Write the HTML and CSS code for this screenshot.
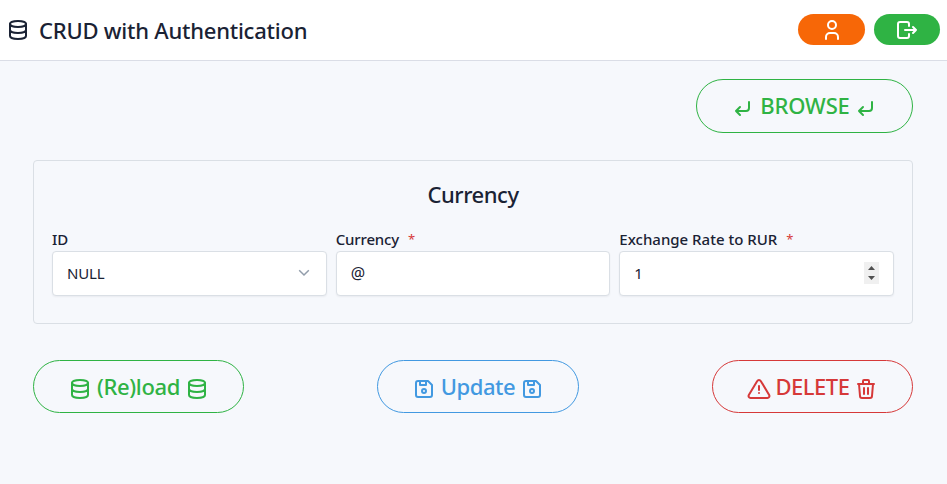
FILE: index.html
```html
<!DOCTYPE html>
<html lang="en">
<head>
<meta charset="utf-8">
<title>CRUD with Authentication</title>
<link rel="stylesheet" href="styles.css">
</head>
<body>
<svg class="sprite" aria-hidden="true">
  <symbol id="database" viewBox="0 0 24 24"><ellipse cx="12" cy="6" rx="8" ry="3"/><path d="M4 6v6a8 3 0 0 0 16 0V6M4 12v6a8 3 0 0 0 16 0v-6"/></symbol>
  <symbol id="user" viewBox="0 0 24 24"><circle cx="12" cy="7" r="4"/><path d="M6 21v-2a4 4 0 0 1 4-4h4a4 4 0 0 1 4 4v2"/></symbol>
  <symbol id="logout" viewBox="0 0 24 24"><path d="M14 8V6a2 2 0 0 0-2-2H5a2 2 0 0 0-2 2v12a2 2 0 0 0 2 2h7a2 2 0 0 0 2-2v-2M10 12h11l-3-3m0 6l3-3"/></symbol>
  <symbol id="enter" viewBox="0 0 24 24"><path d="M18 6v6a3 3 0 0 1-3 3H5l4-4m0 8l-4-4"/></symbol>
  <symbol id="floppy" viewBox="0 0 24 24"><path d="M6 4h10l4 4v10a2 2 0 0 1-2 2H6a2 2 0 0 1-2-2V6a2 2 0 0 1 2-2M14 4v4H8V4"/><circle cx="12" cy="14" r="2"/></symbol>
  <symbol id="alert" viewBox="0 0 24 24"><path d="M12 9v4M12 16v.01M10.24 3.96l-8.42 14.06A1.99 1.99 0 0 0 3.53 21h16.94a1.99 1.99 0 0 0 1.7-2.98L13.74 3.96a2 2 0 0 0-3.5 0z"/></symbol>
  <symbol id="trash" viewBox="0 0 24 24"><path d="M4 7h16M10 11v6M14 11v6M5 7l1 12a2 2 0 0 0 2 2h8a2 2 0 0 0 2-2l1-12M9 7V4a1 1 0 0 1 1-1h4a1 1 0 0 1 1 1v3"/></symbol>
</svg>

<header class="topbar">
  <svg class="icon"><use href="#database"/></svg>
  <h1 class="title">CRUD with Authentication</h1>
  <button class="pill pill-user" aria-label="User"><svg class="icon"><use href="#user"/></svg></button>
  <button class="pill pill-logout" aria-label="Log out"><svg class="icon"><use href="#logout"/></svg></button>
</header>

<main class="page">
  <div class="browse-row">
    <button class="btn btn-browse"><svg class="icon"><use href="#enter"/></svg><span class="label">BROWSE</span><svg class="icon"><use href="#enter"/></svg></button>
  </div>

  <section class="card">
    <h2 class="card-title">Currency</h2>
    <div class="fields">
      <div class="field">
        <div class="caption"><span>ID</span></div>
        <div class="control"><span class="value">NULL</span>
          <svg class="chevron" viewBox="0 0 12 8"><path d="M1.2 1.2L6 6l4.8-4.8"/></svg></div>
      </div>
      <div class="field">
        <div class="caption"><span class="tight">Currency</span><span class="star">*</span></div>
        <div class="control"><span class="value value-at">@</span></div>
      </div>
      <div class="field">
        <div class="caption"><span>Exchange Rate to RUR</span><span class="star">*</span></div>
        <div class="control"><span class="value">1</span>
          <svg class="spinner" viewBox="0 0 15 22"><path d="M4 8L7.5 4 11 8zM4 14h7l-3.500 4z"/></svg></div>
      </div>
    </div>
  </section>

  <div class="actions">
    <button class="btn btn-reload"><svg class="icon"><use href="#database"/></svg><span class="label">(Re)load</span><svg class="icon"><use href="#database"/></svg></button>
    <button class="btn btn-update"><svg class="icon"><use href="#floppy"/></svg><span class="label">Update</span><svg class="icon"><use href="#floppy"/></svg></button>
    <button class="btn btn-delete"><svg class="icon"><use href="#alert"/></svg><span class="label">DELETE</span><svg class="icon"><use href="#trash"/></svg></button>
  </div>
</main>
</body>
</html>
```
FILE: styles.css
```css
* { box-sizing: border-box; }
body {
  margin: 0;
  min-height: 484px;
  background: #f6f8fc;
  color: #1a2234;
  font-family: "Noto Sans", "Open Sans", sans-serif;
  font-size: 15px;
}
.sprite { display: none; }
.icon {
  flex: none;
  width: 24px;
  height: 24px;
  fill: none;
  stroke: currentColor;
  stroke-width: 2;
  stroke-linecap: round;
  stroke-linejoin: round;
}
button { font: inherit; padding: 0; }

.topbar {
  display: flex;
  align-items: center;
  height: 61px;
  padding: 0 7px 0 6px;
  background: #fff;
  border-bottom: 1px solid #dadde6;
}
.title {
  margin: 0 auto 0 9px;
  font-size: 22px;
  font-weight: 500;
  line-height: 30px;
  letter-spacing: -.23px;
  white-space: nowrap;
}
.pill {
  display: flex;
  align-items: center;
  justify-content: center;
  height: 31px;
  border: 0;
  border-radius: 16px;
  color: #fff;
  margin-top: -1px;
}
.pill-user { width: 67px; margin-right: 9px; background: #f76707; }
.pill-logout { width: 66px; background: #2fb344; }

.page { padding: 18px 34px 0 33px; }
.browse-row { display: flex; justify-content: flex-end; }
.btn {
  display: flex;
  align-items: center;
  justify-content: center;
  height: 54px;
  border: 1px solid currentColor;
  border-radius: 27px;
  background: transparent;
  font-size: 22px;
  font-weight: 500;
  line-height: 30px;
}
.btn .icon { margin-top: 4px; }
.label { margin-bottom: 2px; text-align: center; white-space: nowrap; }
.btn-browse { width: 217px; color: #2fb344; }
.btn-browse .label { width: 99px; padding-left: 1px; letter-spacing: -.15px; }

.card {
  height: 164px;
  margin-top: 27px;
  padding: 18px 18px 0;
  border: 1px solid #dadfe5;
  border-radius: 4px;
}
.card-title {
  margin: 0;
  font-size: 22px;
  font-weight: 500;
  line-height: 30px;
  letter-spacing: -.45px;
  text-align: center;
}
.fields {
  display: grid;
  grid-template-columns: repeat(3, 1fr);
  gap: 9px;
  margin-top: 20px;
}
.caption {
  display: flex;
  height: 22px;
  font-size: 15px;
  font-weight: 500;
  line-height: 21px;
  white-space: nowrap;
}
.tight { letter-spacing: -.15px; }
.star { margin-left: 9px; color: #d63939; font-size: 13px; font-weight: 400; line-height: 20px; }
.control {
  display: flex;
  align-items: center;
  justify-content: space-between;
  height: 45px;
  padding: 0 14px;
  background: #fff;
  border: 1px solid #dadfe5;
  border-radius: 4px;
  box-shadow: 0 1px 2px rgba(30, 41, 59, .06);
}
.value { margin-bottom: 2px; letter-spacing: -.2px; }
.value-at { font-size: 16px; }
.chevron {
  width: 12px;
  height: 8px;
  margin: 0 2px 2px 0;
  fill: none;
  stroke: #929dab;
  stroke-width: 1.5;
}
.spinner { width: 15px; height: 22px; margin-bottom: 1px; background: #f0f0f0; fill: #505050; }

.actions { display: flex; justify-content: space-between; margin-top: 36px; }
.actions .btn { height: 53px; }
.btn-reload { width: 211px; color: #2fb344; }
.btn-reload .label { width: 93px; letter-spacing: -.35px; }
.btn-update { width: 202px; color: #4299e1; }
.btn-update .label { width: 84px; letter-spacing: -.45px; }
.btn-delete { width: 201px; color: #d63939; }
.btn-delete .label { width: 83px; letter-spacing: -.5px; }
```
